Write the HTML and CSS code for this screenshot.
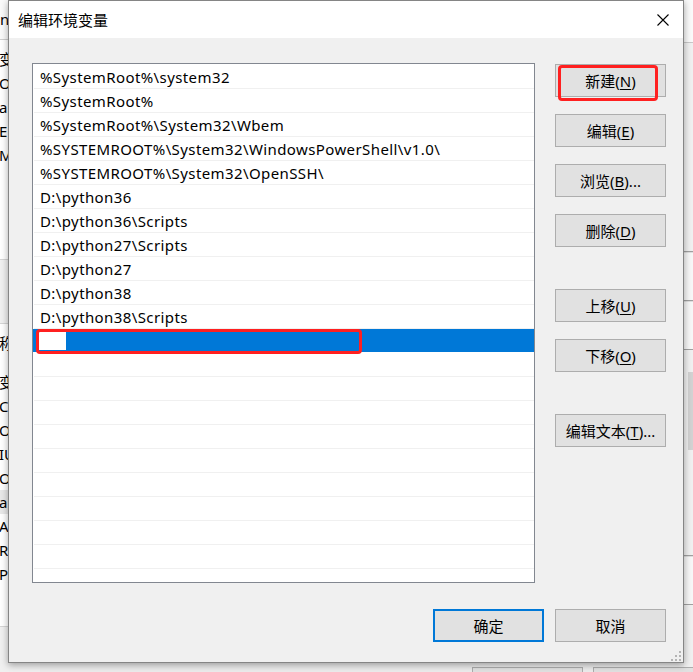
FILE: index.html
```html
<!DOCTYPE html>
<html lang="zh-CN">
<head>
<meta charset="utf-8">
<title>编辑环境变量</title>
<link rel="stylesheet" href="styles.css">
</head>
<body>
<div class="desktop">
  <div class="bg-left">
    <div class="bl-top">ng</div>
    <div class="bl-row bl-head">变量</div>
    <div class="bl-row">Or</div>
    <div class="bl-row">a</div>
    <div class="bl-row">E</div>
    <div class="bl-row">M</div>
    <div class="bl-space"></div>
    <div class="bl-mid"></div>
    <div class="bl-row bl-head">称</div>
    <div class="bl-gap"></div>
    <div class="bl-row">变</div>
    <div class="bl-row">Co</div>
    <div class="bl-row">Or</div>
    <div class="bl-row">IU</div>
    <div class="bl-row">OS</div>
    <div class="bl-row bl-sel">a</div>
    <div class="bl-row">A</div>
    <div class="bl-row">R</div>
    <div class="bl-row">P</div>
    <div class="bl-bottom"></div>
  </div>

  <div class="bg-right">
    <div class="br-top"></div>
    <div class="br-grey"></div>
    <div class="br-line"></div>
    <div class="br-light"></div>
    <div class="br-line"></div>
    <div class="br-light"></div>
    <div class="br-line"></div>
    <div class="br-scroll"><div class="br-thumb"></div></div>
    <div class="br-line"></div>
    <div class="br-light"></div>
    <div class="br-line"></div>
    <div class="br-rest"></div>
  </div>

  <div class="bg-btn bg-btn-1"></div>
  <div class="bg-btn bg-btn-2"></div>

  <div class="dialog">
    <div class="titlebar">
      <span class="title">编辑环境变量</span>
      <span class="close">
        <svg width="12" height="12" viewBox="0 0 12 12"><path d="M0.5 0.5 L11.5 11.5 M11.5 0.5 L0.5 11.5" stroke="#000" stroke-width="1.1" fill="none"/></svg>
      </span>
    </div>
    <div class="body">
      <div class="main">
        <div class="list">
          <div class="row">%SystemRoot%\system32</div>
          <div class="row">%SystemRoot%</div>
          <div class="row">%SystemRoot%\System32\Wbem</div>
          <div class="row">%SYSTEMROOT%\System32\WindowsPowerShell\v1.0\</div>
          <div class="row">%SYSTEMROOT%\System32\OpenSSH\</div>
          <div class="row">D:\python36</div>
          <div class="row">D:\python36\Scripts</div>
          <div class="row">D:\python27\Scripts</div>
          <div class="row">D:\python27</div>
          <div class="row">D:\python38</div>
          <div class="row">D:\python38\Scripts</div>
          <div class="row sel"><span class="edit"></span></div>
          <div class="row"></div>
          <div class="row"></div>
          <div class="row"></div>
          <div class="row"></div>
          <div class="row"></div>
          <div class="row"></div>
          <div class="row"></div>
          <div class="row"></div>
          <div class="row"></div>
          <div class="row"></div>
        </div>
        <div class="side">
          <button class="btn">新建(<u>N</u>)</button>
          <button class="btn">编辑(<u>E</u>)</button>
          <button class="btn">浏览(<u>B</u>)...</button>
          <button class="btn">删除(<u>D</u>)</button>
          <button class="btn gap-big">上移(<u>U</u>)</button>
          <button class="btn">下移(<u>O</u>)</button>
          <button class="btn gap-big">编辑文本(<u>T</u>)...</button>
        </div>
      </div>
      <div class="footer">
        <button class="btn btn-default">确定</button>
        <button class="btn">取消</button>
      </div>
    </div>
    <svg class="grip" width="12" height="12" viewBox="0 0 12 12">
      <rect x="9" y="1" width="2" height="2" fill="#b4b4b4"/>
      <rect x="5" y="5" width="2" height="2" fill="#b4b4b4"/>
      <rect x="9" y="5" width="2" height="2" fill="#b4b4b4"/>
      <rect x="1" y="9" width="2" height="2" fill="#b4b4b4"/>
      <rect x="5" y="9" width="2" height="2" fill="#b4b4b4"/>
      <rect x="9" y="9" width="2" height="2" fill="#b4b4b4"/>
    </svg>
  </div>

  <div class="mark mark-new"></div>
  <div class="mark mark-row"></div>
</div>
</body>
</html>
```

FILE: styles.css
```css
* { box-sizing: border-box; }
html, body { margin: 0; padding: 0; }
body {
  width: 693px;
  height: 672px;
  overflow: hidden;
  background: #f0f0f0;
  font-family: "Noto Sans", "Noto Sans CJK SC", sans-serif;
  font-size: 15px;
  color: #000;
}
.desktop {
  position: relative;
  width: 693px;
  height: 672px;
  overflow: hidden;
  background: #ececec;
}

/* background window on the left */
.bg-left {
  position: absolute;
  left: 0;
  top: 0;
  width: 40px;
  height: 672px;
  background: #fff;
  display: flex;
  flex-direction: column;
  font-size: 15px;
  line-height: 24px;
  white-space: nowrap;
}
.bl-top { height: 40px; line-height: 38px; border-bottom: 1px solid #cfcfcf; background: #fafafa; }
.bl-row { height: 24px; margin-left: -1px; }
.bl-head { background: #fff; margin-top: 7px; }
.bl-sel { background: #e8e8e8; }
.bl-space { height: 92px; }
.bl-mid { height: 65px; background: #f0f0f0; border-top: 1px solid #d5d5d5; border-bottom: 1px solid #d5d5d5; }
.bl-gap { height: 15px; }
.bl-bottom { flex: 1; background: #f0f0f0; border-top: 1px solid #d5d5d5; margin-top: 40px; }

/* background window on the right */
.bg-right {
  position: absolute;
  left: 684px;
  top: 0;
  width: 9px;
  height: 672px;
  display: flex;
  flex-direction: column;
  background: #f0f0f0;
}
.br-top { height: 43px; background: #fafafa; border-bottom: 1px solid #c8c8c8; }
.br-grey { height: 208px; background: #f0f0f0; }
.br-line { height: 1px; background: #a0a0a0; }
.br-light { height: 48px; background: #f7f7f7; border-top: 1px solid #dedede; }
.br-scroll { height: 205px; background: #f0f0f0; padding: 22px 0 0 4px; }
.br-thumb { width: 5px; height: 78px; background: #d2d2d2; }
.br-rest { flex: 1; background: #f0f0f0; }

.bg-btn {
  position: absolute;
  top: 667px;
  width: 111px;
  height: 33px;
  background: #e1e1e1;
  border: 1px solid #adadad;
}
.bg-btn-1 { left: 472px; }
.bg-btn-2 { left: 593px; }

/* dialog */
.dialog {
  position: absolute;
  left: 8px;
  top: 0;
  width: 676px;
  height: 663px;
  border: 1px solid #858585;
  background: #f0f0f0;
  display: flex;
  flex-direction: column;
  box-shadow: 0 2px 7px rgba(0, 0, 0, 0.35);
}
.titlebar {
  height: 37px;
  flex: none;
  background: #fff;
  display: flex;
  align-items: center;
  justify-content: space-between;
  padding-left: 9px;
}
.title { font-size: 15px; line-height: 20px; }
.close {
  width: 40px;
  height: 37px;
  display: flex;
  align-items: center;
  justify-content: center;
}
.body {
  flex: 1;
  display: flex;
  flex-direction: column;
  padding: 25px 17px 20px 23px;
}
.main { display: flex; gap: 20px; }
.list {
  width: 503px;
  height: 520px;
  border: 1px solid #828790;
  background: #fff;
  padding-top: 1px;
  overflow: hidden;
}
.row {
  height: 24px;
  border-bottom: 1px solid #f0f0f0;
  margin-left: 1px;
  padding-left: 6px;
  line-height: 24px;
  letter-spacing: 0.4px;
  white-space: nowrap;
}
.row.sel {
  background: #0078d7;
  margin-left: 0;
  padding-left: 5px;
  display: flex;
  align-items: center;
  border-bottom-color: #fff;
}
.edit {
  width: 28px;
  height: 19px;
  background: #fff;
}
.side {
  width: 111px;
  display: flex;
  flex-direction: column;
  gap: 17px;
  padding-top: 1px;
}
.btn {
  width: 111px;
  height: 33px;
  flex: none;
  margin: 0;
  padding: 0;
  background: #e1e1e1;
  border: 1px solid #adadad;
  font-family: "Noto Sans", "Noto Sans CJK SC", sans-serif;
  font-size: 15px;
  color: #000;
  line-height: 20px;
}
.btn u { text-underline-offset: 2px; }
.gap-big { margin-top: 25px; }
.btn-default { border: 2px solid #0078d7; }
.footer {
  display: flex;
  justify-content: flex-end;
  gap: 11px;
  margin-top: 26px;
}
.grip {
  position: absolute;
  right: 1px;
  bottom: 0;
}

/* red annotation boxes */
.mark {
  position: absolute;
  border: 3px solid #ff2020;
  border-radius: 4px;
}
.mark-new { left: 558px; top: 65px; width: 100px; height: 36px; }
.mark-row { left: 36px; top: 329px; width: 326px; height: 25px; }
```
